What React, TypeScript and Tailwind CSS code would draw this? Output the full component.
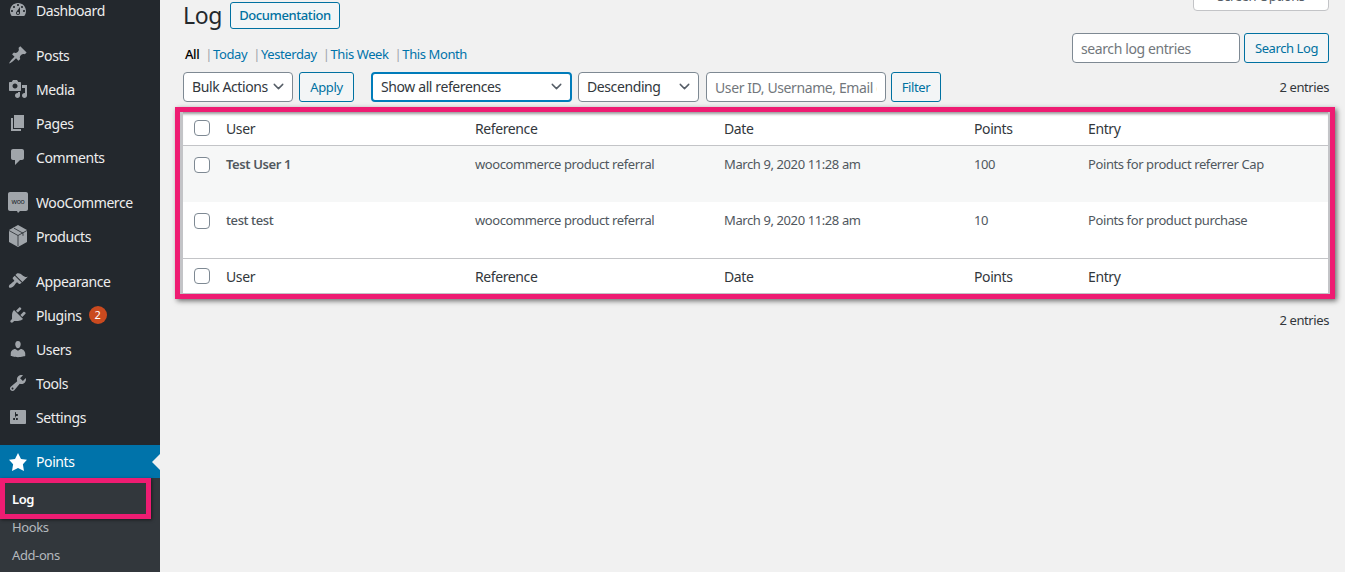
import type { ReactNode } from "react";
import { ChevronDown } from "lucide-react";

const icons: Record<string, string> = {
  dashboard:
    "M3.76 16h12.48c1.1-1.37 1.76-3.11 1.76-5 0-4.42-3.58-8-8-8s-8 3.58-8 8c0 1.89.66 3.63 1.76 5zM10 4c.55 0 1 .45 1 1s-.45 1-1 1-1-.45-1-1 .45-1 1-1zM6 6c.55 0 1 .45 1 1s-.45 1-1 1-1-.45-1-1 .45-1 1-1zm8 0c.55 0 1 .45 1 1s-.45 1-1 1-1-.45-1-1 .45-1 1-1zm-5.37 5.55L12 7v6c0 1.1-.9 2-2 2s-2-.9-2-2c0-.57.24-1.08.63-1.45zM4 10c.55 0 1 .45 1 1s-.45 1-1 1-1-.45-1-1 .45-1 1-1zm12 0c.55 0 1 .45 1 1s-.45 1-1 1-1-.45-1-1 .45-1 1-1zm-5 3c0-.55-.45-1-1-1s-1 .45-1 1 .45 1 1 1 1-.45 1-1z",
  post: "M10.44 3.02l1.82-1.82 6.36 6.35-1.83 1.82c-1.05-.68-2.48-.57-3.41.36l-.75.75c-.92.93-1.04 2.35-.35 3.41l-1.83 1.82-2.41-2.41-2.8 2.79c-.42.42-3.38 2.71-3.8 2.29s1.86-3.39 2.28-3.81l2.79-2.79L4.1 9.36l1.83-1.82c1.05.69 2.48.57 3.4-.36l.75-.75c.93-.92 1.05-2.35.36-3.41z",
  media:
    "M13 11V4c0-.55-.45-1-1-1h-1.67L9 1H5L3.67 3H2c-.55 0-1 .45-1 1v7c0 .55.45 1 1 1h10c.55 0 1-.45 1-1zM7 4.5c1.38 0 2.5 1.12 2.5 2.5S8.38 9.5 7 9.5 4.5 8.38 4.5 7 5.62 4.5 7 4.5zM14 6h5v10.5c0 1.38-1.12 2.5-2.5 2.5S14 17.88 14 16.5s1.12-2.5 2.5-2.5c.17 0 .34.02.5.05V9h-3V6zm-4 8.05V13h2v3.5c0 1.38-1.12 2.5-2.5 2.5S7 17.88 7 16.5 8.12 14 9.5 14c.17 0 .34.02.5.05z",
  page: "M6 15V2h10v13H6zm-1 1h8v2H3V5h2v11z",
  comment:
    "M5 2h9c1.1 0 2 .9 2 2v7c0 1.1-.9 2-2 2h-2l-5 5v-5H5c-1.1 0-2-.9-2-2V4c0-1.1.9-2 2-2z",
  appearance:
    "M14.48 11.06L7.41 3.99l1.5-1.5c.5-.56 2.3-.47 3.51.32 1.21.8 1.43 1.28 2.91 2.1 1.18.64 2.45 1.26 4.45.85zm-.71.71L6.7 4.7 4.93 6.47c-.39.39-.39 1.02 0 1.41l1.06 1.06c.39.39.39 1.03 0 1.42-.6.6-1.43 1.11-2.21 1.69-.35.26-.7.53-1.01.84C1.43 13.23.28 15.56 1.2 16.48c.92.92 3.25-.23 4.58-1.56.31-.31.58-.66.85-1.02.57-.78 1.08-1.61 1.69-2.21.39-.39 1.02-.39 1.41 0l1.06 1.06c.39.39 1.02.39 1.41 0z",
  plugin:
    "M13.11 4.36L9.87 7.6 8 5.73l3.24-3.24c.35-.34 1.05-.2 1.56.32.52.51.66 1.21.31 1.55zm-8 1.77l.91-1.12 9.01 9.01-1.19.84c-.71.71-2.63 1.16-3.82 1.16H6.14L4.9 17.26c-.59.59-1.54.59-2.12 0-.59-.58-.59-1.53 0-2.12l1.24-1.24v-3.88c0-1.13.4-3.19 1.09-3.89zm7.26 3.97l3.24-3.24c.34-.35 1.04-.21 1.55.31.52.51.66 1.21.31 1.55l-3.24 3.25z",
  users:
    "M10 9.25c-2.27 0-2.73-3.44-2.73-3.44C7 4.02 7.82 2 9.97 2c2.16 0 2.98 2.02 2.71 3.81 0 0-.41 3.44-2.68 3.44zm0 2.57L12.72 10c2.39 0 4.52 2.33 4.52 4.53v2.49s-3.65 1.13-7.24 1.13c-3.65 0-7.24-1.13-7.24-1.13v-2.49c0-2.25 1.94-4.48 4.47-4.48z",
  tools:
    "M16.68 9.77c-1.34 1.34-3.3 1.67-4.95.99l-5.41 6.52c-.99.99-2.59.99-3.58 0s-.99-2.59 0-3.57l6.52-5.42c-.68-1.65-.35-3.61.99-4.95 1.28-1.28 3.12-1.62 4.72-1.06l-2.89 2.89 2.82 2.82 2.86-2.87c.53 1.58.18 3.39-1.08 4.65zM3.81 16.21c.4.39 1.04.39 1.43 0 .4-.4.4-1.04 0-1.43-.39-.4-1.03-.4-1.43 0-.39.39-.39 1.03 0 1.43z",
  settings:
    "M18 16V4c0-.55-.45-1-1-1H3c-.55 0-1 .45-1 1v12c0 .55.45 1 1 1h14c.55 0 1-.45 1-1zM8 11h1c.55 0 1 .45 1 1s-.45 1-1 1H8v1.5c0 .28-.22.5-.5.5s-.5-.22-.5-.5V13H6c-.55 0-1-.45-1-1s.45-1 1-1h1V5.5c0-.28.22-.5.5-.5s.5.22.5.5V7h1c.55 0 1 .45 1 1s-.45 1-1 1h-1v5.5c0 .28-.22.5-.5.5s-.5-.22-.5-.5V9z",
  star: "M10 1l3 6 6 .75-4.12 4.62L16 19l-6-3-6 3 1.13-6.63L1 7.75 7 7z",
};

function MenuIcon({ name, white }: { name: string; white?: boolean }) {
  return (
    <svg
      viewBox="0 0 20 20"
      className={white ? "h-5 w-5 fill-white" : "h-5 w-5 fill-[#a0a5aa]"}
    >
      <path d={icons[name]} />
    </svg>
  );
}

function WooIcon() {
  return (
    <svg viewBox="0 0 20 21" className="h-[21px] w-5">
      <path
        className="fill-[#a0a5aa]"
        d="M2 0h16c1.1 0 2 .9 2 2v15c0 1.1-.9 2-2 2h-6l-2 2-1-2H2c-1.1 0-2-.9-2-2V2C0 .9.9 0 2 0z"
      />
      <text x="10" y="12" textAnchor="middle" fontSize="7" fill="#23282d">
        woo
      </text>
    </svg>
  );
}

function ProductIcon() {
  return (
    <svg viewBox="0 0 20 22" className="h-[22px] w-5">
      <path className="fill-[#a0a5aa]" d="M10 0l9 5v12l-9 5-9-5V5z" />
      <path
        d="M1 5.5l9 5 9-5M10 10.5V21M6 3.2l9 5v2.6"
        fill="none"
        stroke="#23282d"
        strokeWidth="0.8"
      />
    </svg>
  );
}

function MenuRow({ icon, label, children }: { icon: ReactNode; label: string; children?: ReactNode }) {
  return (
    <div className="flex h-[34px] items-center gap-2 pl-2 text-[14px] text-[#eeeeee]">
      {icon}
      <span>{label}</span>
      {children}
    </div>
  );
}

function MenuItem({ icon, label, children }: { icon: string; label: string; children?: ReactNode }) {
  return (
    <MenuRow icon={<MenuIcon name={icon} />} label={label}>
      {children}
    </MenuRow>
  );
}

function Sidebar() {
  return (
    <aside className="flex w-[160px] shrink-0 flex-col bg-[#23282d]">
      <div className="-mt-[7px] shrink-0">
        <MenuItem icon="dashboard" label="Dashboard" />
      </div>
      <div className="mt-[11px] shrink-0">
        <MenuItem icon="post" label="Posts" />
        <MenuItem icon="media" label="Media" />
        <MenuItem icon="page" label="Pages" />
        <MenuItem icon="comment" label="Comments" />
      </div>
      <div className="mt-[11px] shrink-0">
        <MenuRow icon={<WooIcon />} label="WooCommerce" />
        <MenuRow icon={<ProductIcon />} label="Products" />
      </div>
      <div className="mt-[11px] shrink-0">
        <MenuItem icon="appearance" label="Appearance" />
        <MenuItem icon="plugin" label="Plugins">
          <span className="-ml-[1px] flex h-[18px] w-[18px] items-center justify-center rounded-full bg-[#ca4a1f] text-[11px] text-white">
            2
          </span>
        </MenuItem>
        <MenuItem icon="users" label="Users" />
        <MenuItem icon="tools" label="Tools" />
        <MenuItem icon="settings" label="Settings" />
      </div>
      <div className="relative mt-[11px] flex h-[33px] shrink-0 items-center gap-2 bg-[#0073aa] pl-2 text-[14px] text-white">
        <MenuIcon name="star" white />
        <span>Points</span>
        <span className="absolute right-0 top-[9px] h-0 w-0 border-y-[8px] border-r-[8px] border-y-transparent border-r-[#f1f1f1]" />
      </div>
      <div className="flex flex-1 shrink-0 flex-col bg-[#32373c] text-[13px] text-[#b4b9be]">
        <div className="relative flex h-[41px] w-[151px] shrink-0 items-center border-[5px] border-[#ee1c72] pl-[7px] pt-[3px] font-semibold text-white shadow-[1px_1px_3px_rgba(0,0,0,0.5)]">
          Log
        </div>
        <div className="-mt-[5px] flex h-[28px] shrink-0 items-center pl-3">Hooks</div>
        <div className="flex h-[28px] shrink-0 items-center pl-3">Add-ons</div>
      </div>
    </aside>
  );
}

function Select({ label, width, focus }: { label: string; width: string; focus?: boolean }) {
  return (
    <div
      className={`flex h-[30px] items-center justify-between whitespace-nowrap rounded-[4px] bg-white pb-[1px] pl-2 pr-[5px] text-[14px] text-[#32373c] ${width} ${
        focus ? "border-2 border-[#007cba]" : "border border-[#7e8993]"
      }`}
    >
      <span>{label}</span>
      <ChevronDown size={17} strokeWidth={2} className="text-[#555d66]" />
    </div>
  );
}

function Button({ label, width }: { label: string; width: string }) {
  return (
    <button className={`h-[30px] rounded-[3px] border border-[#0071a1] bg-[#f3f5f6] pt-[1px] text-[13px] text-[#0071a1] ${width}`}>
      {label}
    </button>
  );
}

function Checkbox() {
  return (
    <input
      type="checkbox"
      readOnly
      className="h-4 w-4 appearance-none rounded-[4px] border border-[#7e8993] bg-white"
    />
  );
}

const cols = "grid grid-cols-[43px_249px_249px_250px_114px_1fr]";

function HeadRow({ className }: { className: string }) {
  return (
    <div className={`${cols} items-center text-[14px] text-[#32373c] ${className}`}>
      <div className="flex pl-[11px]">
        <Checkbox />
      </div>
      <span>User</span>
      <span>Reference</span>
      <span>Date</span>
      <span>Points</span>
      <span>Entry</span>
    </div>
  );
}

const rows = [
  { user: "Test User 1", points: "100", entry: "Points for product referrer Cap", bg: "bg-[#f6f7f7]", strong: true },
  { user: "test test", points: "10", entry: "Points for product purchase", bg: "bg-white", strong: false },
];

function LogTable() {
  return (
    <div className="-ml-2 -mr-[6px] mt-[5px] border-[5px] border-[#ee1c72] bg-white shadow-[2px_2px_5px_rgba(0,0,0,0.55)]">
      <div className="border-b border-l-[3px] border-r-[2px] border-[#c3c4c7]">
        <HeadRow className="h-[34px] border-b border-[#c3c4c7] pb-[1px] shadow-[inset_0_4px_3px_-2px_rgba(0,0,0,0.4)]" />
        {rows.map((row) => (
          <div key={row.user} className={`${cols} h-[56px] pt-[9px] text-[13px] text-[#50575e] ${row.bg}`}>
            <div className="flex pl-[11px] pt-[2px]">
              <Checkbox />
            </div>
            <span className={row.strong ? "font-semibold" : "font-medium"}>{row.user}</span>
            <span>woocommerce product referral</span>
            <span>March 9, 2020 11:28 am</span>
            <span>{row.points}</span>
            <span>{row.entry}</span>
          </div>
        ))}
        <HeadRow className="h-[35px] border-t border-[#c3c4c7]" />
      </div>
    </div>
  );
}

const views = ["Today", "Yesterday", "This Week", "This Month"];

export default function App() {
  return (
    <div
      className="flex h-[572px] w-[1345px] overflow-hidden bg-[#f1f1f1] text-[13px] tracking-[-0.4px] text-[#444444]"
      style={{ fontFamily: '"Noto Sans", sans-serif' }}
    >
      <Sidebar />
      <main className="flex min-w-0 flex-1 flex-col pl-[23px] pr-4">
        {/* Page title, screen options cut off by the top of the window */}
        <div className="flex h-[33px] items-start justify-between">
          <div className="flex items-start gap-[10px] pt-[2px]">
            <h1 className="w-[37px] text-[23px] leading-[26px] text-[#23282d]">Log</h1>
            <button className="h-[27px] w-[110px] rounded-[3px] border border-[#0071a1] bg-[#f3f5f6] pt-[1px] text-[13px] font-medium text-[#0071a1]">
              Documentation
            </button>
          </div>
          <div className="-mt-[17px] flex h-[28px] w-[136px] items-center justify-center rounded-b-[4px] border border-[#c3c4c7] bg-white text-[13px] text-[#555d66]">
            Screen Options
          </div>
        </div>

        <div className="flex h-[30px] items-end justify-between">
          <div className="-mb-[1px] flex items-end text-[13px]">
            <span className="pl-[2px] font-medium text-[#000000]">All</span>
            {views.map((view) => (
              <span key={view} className="ml-[6px] text-[#0073aa]">
                <span className="mr-[1px] text-[#a0a5aa]">|</span>
                {view}
              </span>
            ))}
          </div>
          <div className="flex gap-1">
            <input
              placeholder="search log entries"
              className="h-[30px] w-[168px] rounded-[4px] border border-[#7e8993] bg-white px-2 text-[14px] placeholder:text-[#72777c]"
            />
            <Button label="Search Log" width="w-[85px]" />
          </div>
        </div>

        <div className="mt-[9px] flex h-[30px] items-center">
          <Select label="Bulk Actions" width="w-[110px]" />
          <div className="ml-[6px]">
            <Button label="Apply" width="w-[55px]" />
          </div>
          <div className="ml-[17px]">
            <Select label="Show all references" width="w-[201px]" focus />
          </div>
          <div className="ml-[6px]">
            <Select label="Descending" width="w-[121px]" />
          </div>
          <input
            placeholder="User ID, Username, Email or Display Name"
            className="ml-[7px] h-[30px] w-[180px] rounded-[4px] border border-[#7e8993] bg-white px-2 text-[14px] placeholder:text-[#72777c]"
          />
          <div className="ml-[5px]">
            <Button label="Filter" width="w-[50px]" />
          </div>
          <span className="ml-auto pt-[1px] text-[13px] text-[#32373c]">2 entries</span>
        </div>

        <LogTable />

        <div className="mt-[12px] text-right text-[13px] text-[#32373c]">2 entries</div>
      </main>
    </div>
  );
}
